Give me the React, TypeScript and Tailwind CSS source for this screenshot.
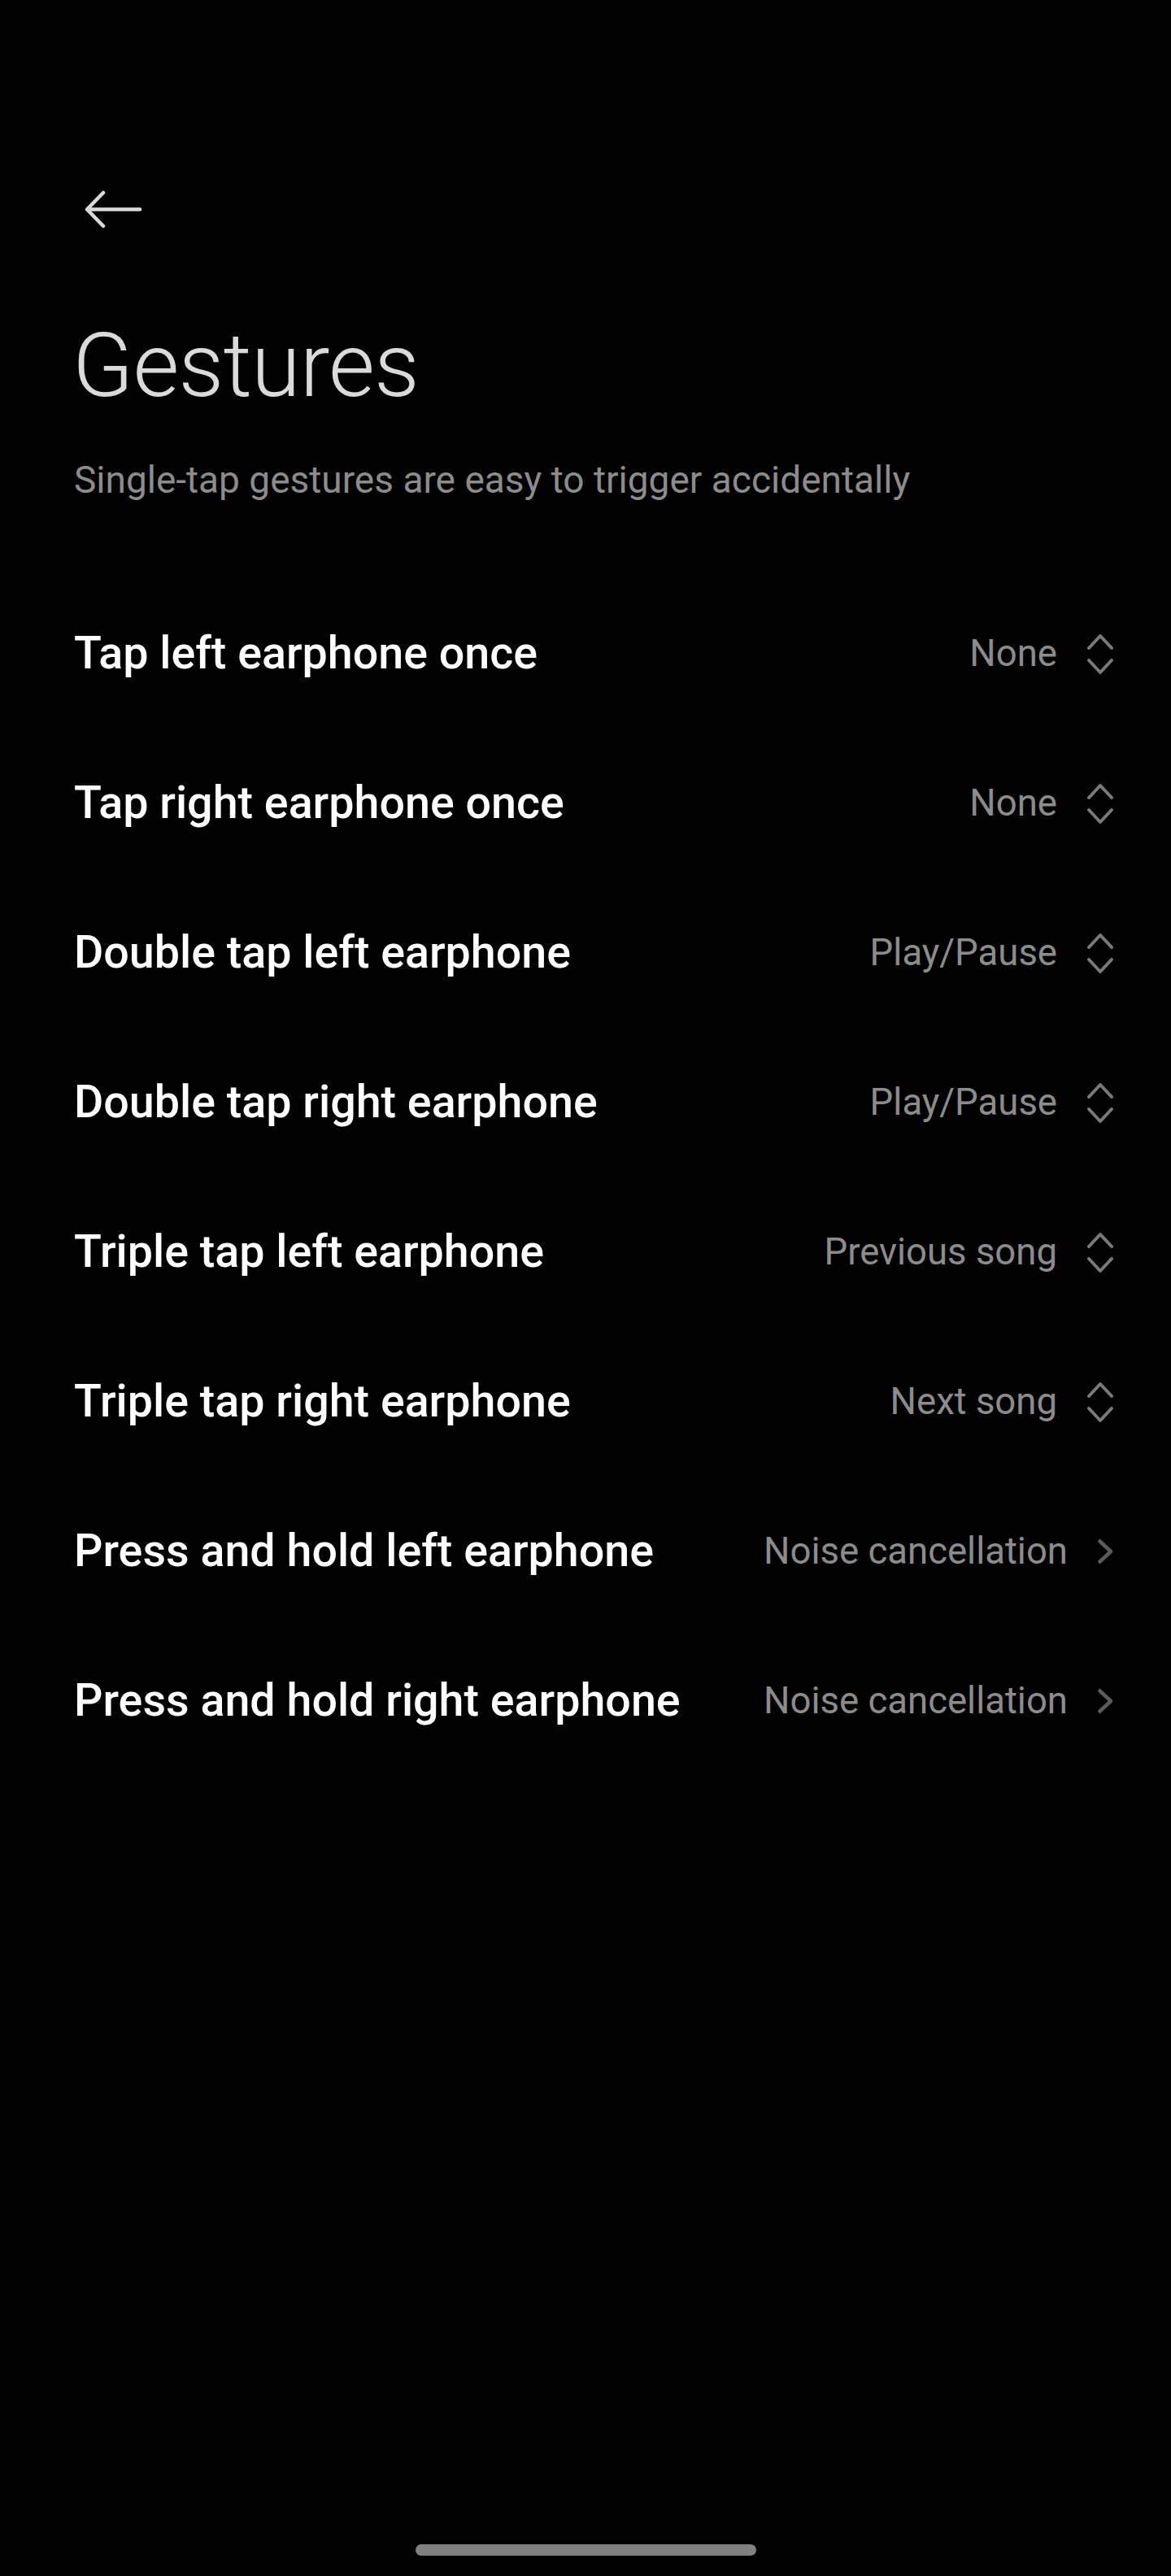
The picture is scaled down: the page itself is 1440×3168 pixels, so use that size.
import React from 'react';

// Gesture rows shown on the settings page
interface GestureRow {
  label: string;
  value: string;
  kind: 'select' | 'link';
}

const rows: GestureRow[] = [
  { label: 'Tap left earphone once', value: 'None', kind: 'select' },
  { label: 'Tap right earphone once', value: 'None', kind: 'select' },
  { label: 'Double tap left earphone', value: 'Play/Pause', kind: 'select' },
  { label: 'Double tap right earphone', value: 'Play/Pause', kind: 'select' },
  { label: 'Triple tap left earphone', value: 'Previous song', kind: 'select' },
  { label: 'Triple tap right earphone', value: 'Next song', kind: 'select' },
  { label: 'Press and hold left earphone', value: 'Noise cancellation', kind: 'link' },
  { label: 'Press and hold right earphone', value: 'Noise cancellation', kind: 'link' },
];

function BackArrow() {
  return (
    <svg width="71" height="49" viewBox="0 0 71 49" fill="none">
      <path
        d="M4 24.5H69M24 4L4 24.5L24 45"
        stroke="#d9d9d9"
        strokeWidth="4.5"
        strokeLinecap="round"
        strokeLinejoin="round"
      />
    </svg>
  );
}

function UpDownIcon() {
  return (
    <svg width="34" height="53" viewBox="0 0 34 53" fill="none">
      <path
        d="M3 19L17 4L31 19M3 34L17 49L31 34"
        stroke="#7a7a7a"
        strokeWidth="4"
        strokeLinecap="round"
        strokeLinejoin="round"
      />
    </svg>
  );
}

function RightChevron() {
  return (
    <svg width="21" height="32" viewBox="0 0 21 32" fill="none">
      <path
        d="M3.5 3.5L17 16L3.5 28.5"
        stroke="#5c5c5c"
        strokeWidth="4.5"
        strokeLinecap="round"
        strokeLinejoin="round"
      />
    </svg>
  );
}

export default function App() {
  return (
    <div
      className="min-h-[3168px] w-full bg-black flex flex-col"
      style={{ fontFamily: 'Roboto, "Noto Sans", sans-serif' }}
    >
      {/* Header */}
      <div className="pt-[233px] pl-[103px]">
        <BackArrow />
      </div>

      <h1 className="mt-[112px] pl-[89px] h-[112px] leading-[112px] text-[110px] font-light text-[#dadada] tracking-[-0.8px]">
        Gestures
      </h1>

      <p className="mt-[54px] pl-[91px] h-[60px] leading-[60px] text-[46px] text-[#8c8c8c]">
        Single-tap gestures are easy to trigger accidentally
      </p>

      {/* Gesture list */}
      <div className="mt-[92px] flex flex-col">
        {rows.map((row) => (
          <div
            key={row.label}
            className="h-[184px] flex items-center justify-between pl-[91px] pr-[70px]"
          >
            <span className="text-[55.6px] font-medium text-white">{row.label}</span>
            <div className="flex items-center gap-[36px]">
              <span className="text-[45.5px] text-[#8c8c8c]">{row.value}</span>
              {row.kind === 'select' ? <UpDownIcon /> : <RightChevron />}
            </div>
          </div>
        ))}
      </div>

      <div className="flex-1" />

      {/* Home indicator */}
      <div className="flex justify-center pb-[25px]">
        <div className="w-[419px] h-[14px] rounded-full bg-[#808080]" />
      </div>
    </div>
  );
}
